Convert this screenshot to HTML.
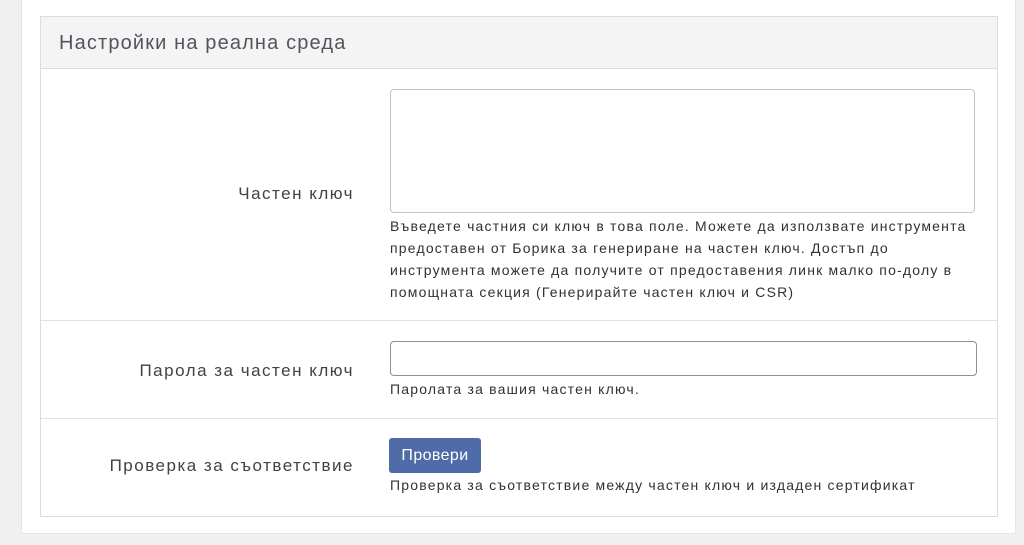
<!DOCTYPE html>
<html><head><meta charset="utf-8"><style>
body{margin:0;width:1024px;height:545px;background:#f0f0f1;position:relative;overflow:hidden;font-family:"Liberation Sans","DejaVu Sans",sans-serif;color:#3c434a}
.panel{position:absolute;left:21px;top:0;width:993px;height:533px;background:#fff;border-right:1px solid #e5e5e5;border-left:1px solid #e5e5e5;border-bottom:1px solid #e5e5e5}
.card{position:absolute;left:40px;top:16px;width:956px;height:499px;border:1px solid #dcdcde;background:#fff}
.hdr{height:51px;background:#f4f4f5;border-bottom:1px solid #dcdcde;font-size:20px;letter-spacing:1.15px;color:#50545c;line-height:52px;padding-left:18px}
.row{position:absolute;left:0;width:956px;border-top:1px solid #e2e2e4}
.lbl{position:absolute;right:643px;font-size:17px;letter-spacing:1.5px;color:#3c434a;white-space:nowrap}
.help{position:absolute;left:349px;font-size:14px;letter-spacing:1.2px;line-height:22px;color:#2c3338;width:620px;white-space:nowrap}
.ta{position:absolute;left:349px;top:72px;width:585px;height:124px;border:1px solid #c3c4c7;border-radius:4px;box-sizing:border-box}
.in{position:absolute;left:349px;width:587px;height:35px;border:1px solid #8c8f94;border-radius:4px;box-sizing:border-box}
.btn{position:absolute;left:348px;width:92px;height:35px;background:#4f6ca9;border-radius:3px;color:#fff;font-size:16px;letter-spacing:0.4px;line-height:35px;text-align:center}
</style></head><body>
<div class="panel"></div>
<div class="card">
<div class="hdr">Настройки на реална среда</div>
<div class="ta"></div>
<div class="lbl" style="top:167px">Частен ключ</div>
<div class="help" style="top:198px">Въведете частния си ключ в това поле. Можете да използвате инструмента<br>предоставен от Борика за генериране на частен ключ. Достъп до<br>инструмента можете да получите от предоставения линк малко по-долу в<br>помощната секция (Генерирайте частен ключ и CSR)</div>
<div class="row" style="top:303px;height:97px"></div>
<div class="in" style="top:324px"></div>
<div class="lbl" style="top:344px">Парола за частен ключ</div>
<div class="help" style="top:361px">Паролата за вашия частен ключ.</div>
<div class="row" style="top:401px;height:97px"></div>
<div class="btn" style="top:421px">Провери</div>
<div class="lbl" style="top:439px">Проверка за съответствие</div>
<div class="help" style="top:457px">Проверка за съответствие между частен ключ и издаден сертификат</div>
</div>
</body></html>
